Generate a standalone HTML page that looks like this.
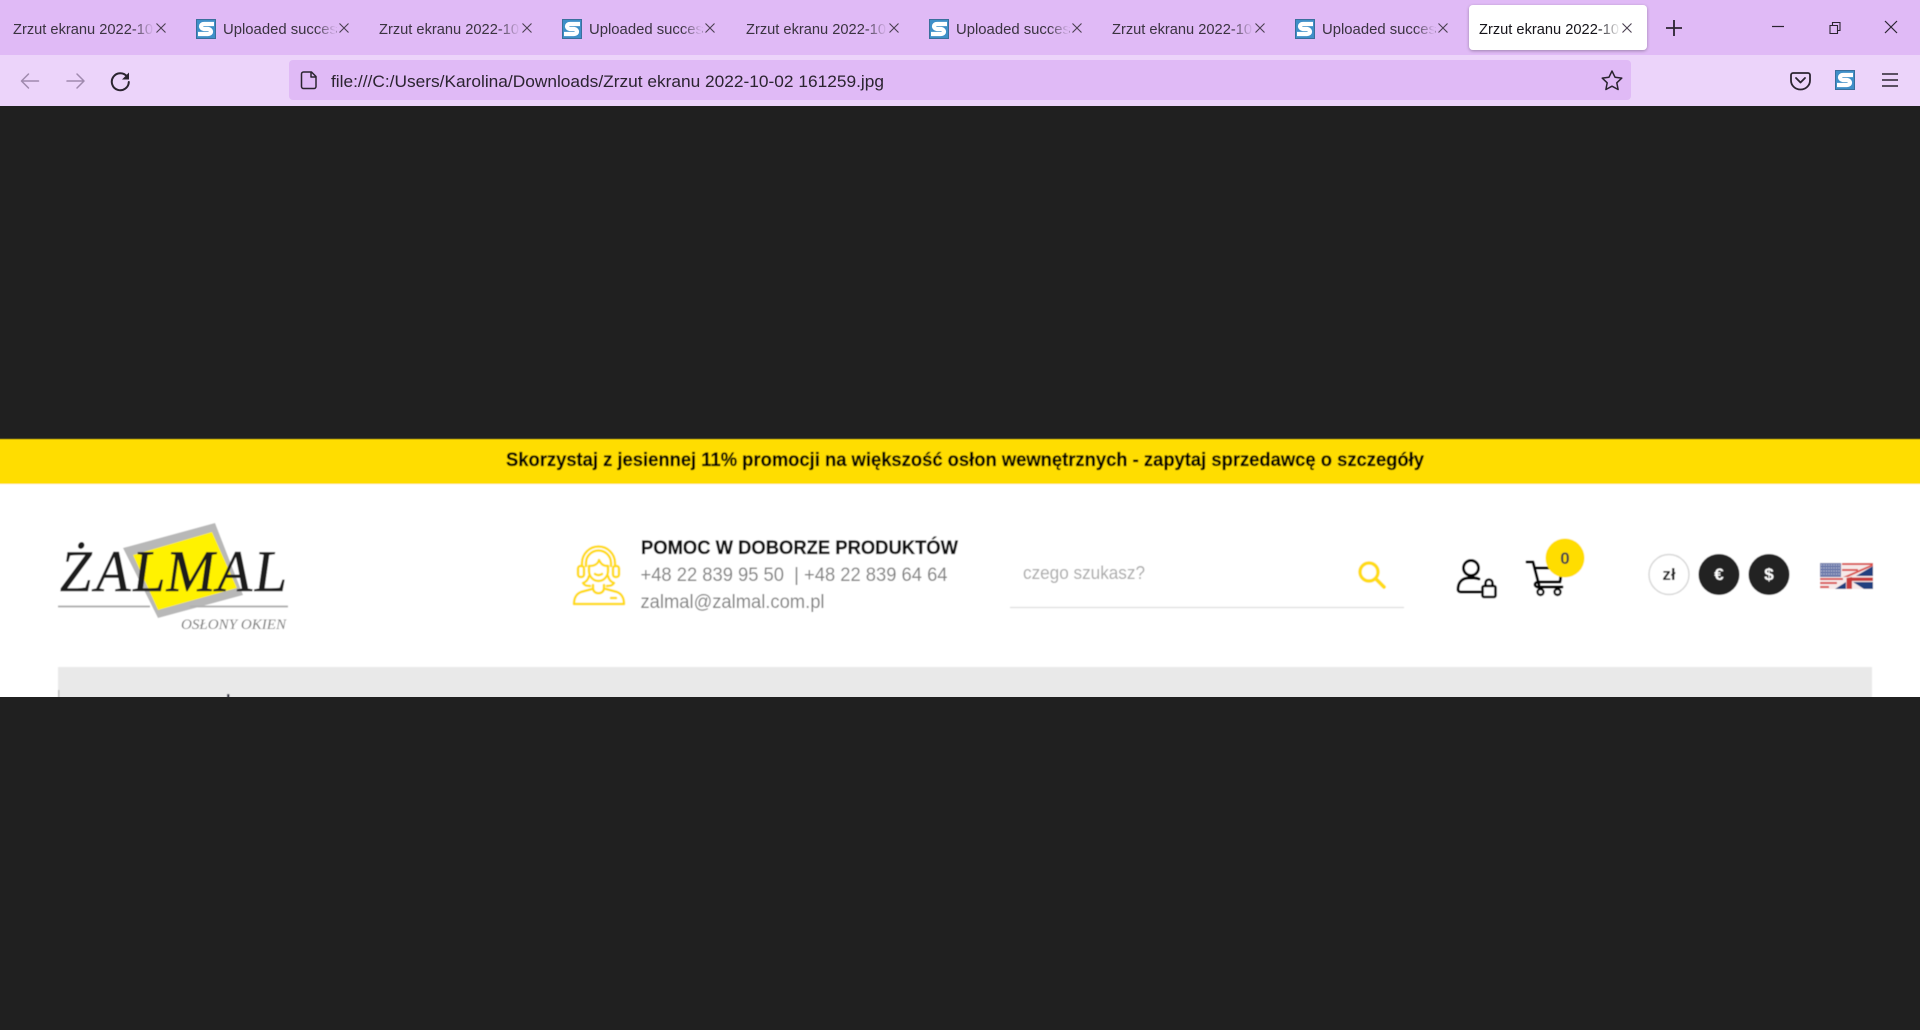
<!DOCTYPE html>
<html lang="pl">
<head>
<meta charset="utf-8">
<title>Zrzut ekranu 2022-10-02 161259.jpg</title>
<style>
html,body{margin:0;padding:0;background:#202020;width:1920px;height:1030px;overflow:hidden}
svg{position:absolute;left:0;top:0;display:block}
text{font-family:"Liberation Sans",sans-serif}
.tab{font-size:14.5px;fill:#3a3340}
.x{stroke:#4a3f50;stroke-width:1.1;fill:none}
.ic{stroke:#2b2430;stroke-width:1.5;fill:none;stroke-linecap:round;stroke-linejoin:round}
.y{stroke:#ffdc14;stroke-width:2.500;fill:none;stroke-linecap:round;stroke-linejoin:round}
.k{stroke:#000;stroke-width:2.900;fill:none;stroke-linecap:round;stroke-linejoin:round}
</style>
</head>
<body>
<svg width="1920" height="1030" viewBox="0 0 1920 1030" xmlns="http://www.w3.org/2000/svg">
<defs>
<linearGradient id="fade"><stop offset="0" stop-color="#e0baf6" stop-opacity="0"/><stop offset="1" stop-color="#e0baf6"/></linearGradient>
<linearGradient id="fadew"><stop offset="0" stop-color="#fff" stop-opacity="0"/><stop offset="1" stop-color="#fff"/></linearGradient>
<filter id="sh" x="-10%" y="-20%" width="120%" height="140%"><feDropShadow dx="0" dy="1" stdDeviation="1.500" flood-color="#000" flood-opacity=".3"/></filter>
<filter id="soft" filterUnits="userSpaceOnUse" x="-20" y="420" width="1960" height="300"><feGaussianBlur stdDeviation="0.400"/></filter>
<g id="fav"><rect x="0.500" y="0.500" width="19" height="19" fill="#3f8fc8" stroke="#3a6f9c"/><path d="M18 5H8C4 5 4 9.500 8 10h4c4 .5 4 5 0 5H2" fill="none" stroke="#fff" stroke-width="4.200"/></g>
<g id="cl"><path class="x" d="M-4.500-4.500 4.500 4.500M4.500-4.500-4.500 4.500"/></g>
</defs>

<rect width="1920" height="55" fill="#e0baf6"/>
<rect y="55" width="1920" height="51" fill="#ecd4fa"/>
<rect x="289" y="60" width="1342" height="40" rx="4" fill="#e0baf6"/>

<text class="tab" x="13" y="34" textLength="140" lengthAdjust="spacingAndGlyphs">Zrzut ekranu 2022-10</text>
<rect x="133" y="15" width="21" height="30" fill="url(#fade)"/><use href="#cl" x="161" y="28"/>
<use href="#fav" x="196" y="19"/>
<text class="tab" x="223" y="34" textLength="114" lengthAdjust="spacingAndGlyphs">Uploaded succes</text>
<rect x="316" y="15" width="20" height="30" fill="url(#fade)"/><use href="#cl" x="344" y="28"/>

<text class="tab" x="379" y="34" textLength="140" lengthAdjust="spacingAndGlyphs">Zrzut ekranu 2022-10</text>
<rect x="499" y="15" width="21" height="30" fill="url(#fade)"/><use href="#cl" x="527" y="28"/>
<use href="#fav" x="562" y="19"/>
<text class="tab" x="589" y="34" textLength="114" lengthAdjust="spacingAndGlyphs">Uploaded succes</text>
<rect x="682" y="15" width="20" height="30" fill="url(#fade)"/><use href="#cl" x="710" y="28"/>

<text class="tab" x="746" y="34" textLength="140" lengthAdjust="spacingAndGlyphs">Zrzut ekranu 2022-10</text>
<rect x="866" y="15" width="21" height="30" fill="url(#fade)"/><use href="#cl" x="894" y="28"/>
<use href="#fav" x="929" y="19"/>
<text class="tab" x="956" y="34" textLength="114" lengthAdjust="spacingAndGlyphs">Uploaded succes</text>
<rect x="1049" y="15" width="20" height="30" fill="url(#fade)"/><use href="#cl" x="1077" y="28"/>

<text class="tab" x="1112" y="34" textLength="140" lengthAdjust="spacingAndGlyphs">Zrzut ekranu 2022-10</text>
<rect x="1232" y="15" width="21" height="30" fill="url(#fade)"/><use href="#cl" x="1260" y="28"/>
<use href="#fav" x="1295" y="19"/>
<text class="tab" x="1322" y="34" textLength="114" lengthAdjust="spacingAndGlyphs">Uploaded succes</text>
<rect x="1415" y="15" width="20" height="30" fill="url(#fade)"/><use href="#cl" x="1443" y="28"/>

<rect x="1469" y="5" width="178" height="45" rx="4" fill="#fff" filter="url(#sh)"/>
<text class="tab" x="1479" y="34" textLength="140" lengthAdjust="spacingAndGlyphs" style="fill:#15141a">Zrzut ekranu 2022-10</text>
<rect x="1599" y="15" width="21" height="30" fill="url(#fadew)"/><use href="#cl" x="1627" y="28"/>

<path d="M1674 20v16M1666 28h16" stroke="#2b2430" stroke-width="1.800"/>
<path d="M1772 26.500h12" stroke="#2b2430" stroke-width="1.200"/>
<path d="M1830 25.500h7.500v8h-7.500zM1832.500 25.500v-3h7.500v8h-2.500" fill="none" stroke="#2b2430" stroke-width="1.100"/>
<path d="M1885 21l12 12M1897 21l-12 12" stroke="#2b2430" stroke-width="1.200"/>

<g stroke="#a08aae" stroke-width="1.500" fill="none" stroke-linecap="round" stroke-linejoin="round">
<path d="M21.500 81h17M28.500 74l-7 7 7 7"/>
<path d="M67 81h17M77 74l7 7-7 7"/>
</g>
<path class="ic" style="stroke-width:2" d="M127 76.500A8.500 8.500 0 1 0 128.800 82"/>
<path d="M129 72.500v7h-7z" fill="#2b2430"/>
<path class="ic" d="M303.500 72h8l4.500 4.500v10a2 2 0 0 1-2 2h-10.500a2 2 0 0 1-2-2v-12.500a2 2 0 0 1 2-2zM311 72v5h5"/>
<text x="331" y="87" font-size="17" fill="#2b2430" textLength="553" lengthAdjust="spacingAndGlyphs">file:///C:/Users/Karolina/Downloads/Zrzut ekranu 2022-10-02 161259.jpg</text>
<path class="ic" d="M1612 71l3 6.200 6.800.9-5 4.700 1.300 6.700-6.100-3.300-6.100 3.300 1.300-6.700-5-4.700 6.800-.9z"/>
<path class="ic" style="stroke-width:1.800" d="M1793 73h15a2 2 0 0 1 2 2v5.500a9.500 9 0 0 1-19 0V75a2 2 0 0 1 2-2zM1796 78l4.500 4.500 4.500-4.500"/>
<use href="#fav" transform="translate(1835 70)"/>
<path d="M1882 74h16M1882 80h16M1882 86h16" stroke="#2b2430" stroke-width="1.600"/>

<g filter="url(#soft)">
<rect x="-20" y="484" width="1960" height="225" fill="#fff"/>
<rect x="-20" y="439" width="1960" height="45" fill="#ffdd00"/>
<text x="506" y="466" font-size="19" font-weight="700" fill="#000" stroke="#000" stroke-width=".25" textLength="918" lengthAdjust="spacingAndGlyphs">Skorzystaj z jesiennej 11% promocji na większość osłon wewnętrznych - zapytaj sprzedawcę o szczegóły</text>

<path d="M215 523 243 595 158 618 123 548z" fill="#b8b8b8"/>
<path d="M212 532 237 588 158 610 133 555z" fill="#fff200"/>
<path d="M58 606.500H150M190 606.500H288" stroke="#b0b0b0" stroke-width="2"/>
<text transform="translate(58 591) skewX(-8)" x="0" y="0" font-size="59" stroke="#1c1c1c" stroke-width=".6" textLength="228" lengthAdjust="spacingAndGlyphs" style="font-family:'Liberation Serif',serif" fill="#1c1c1c">ŻALMAL</text>
<text x="181" y="629" font-size="15" font-style="italic" textLength="105" lengthAdjust="spacingAndGlyphs" style="font-family:'Liberation Serif',serif" fill="#777">OSŁONY OKIEN</text>

<g class="y">
<path d="M582 566v-3a16.500 16.500 0 0 1 33 0v3"/>
<path d="M586 566v-3a12.500 12.500 0 0 1 25 0v3"/>
<rect x="578" y="566" width="6" height="11" rx="2.500"/>
<rect x="613" y="566" width="6" height="11" rx="2.500"/>
<path d="M589 566c5 0 9-2 10-6 2 4 4 6 9 6v5a9.500 10 0 0 1-19 0z"/>
<path d="M595 574c2 1.500 5 1.500 7 0"/>
<path d="M589 576c-1 4-3 6-6 7 1 2 4 3 7 3M608 576c1 4 3 6 6 7-1 2-4 3-7 3"/>
<path d="M593 585v3c0 7 11 7 11 0v-3"/>
<path d="M592 589 581 592c-5 2-7 6-7 12h50c0-6-2-10-7-12l-11-3"/>
<path d="M611 598h5"/>
</g>
<text x="641" y="554" font-size="19" font-weight="700" fill="#111" stroke="#111" stroke-width=".3" textLength="317" lengthAdjust="spacingAndGlyphs">POMOC W DOBORZE PRODUKTÓW</text>
<text x="640.500" y="581" font-size="19" fill="#808080" xml:space="preserve" textLength="307" lengthAdjust="spacingAndGlyphs">+48 22 839 95 50  | +48 22 839 64 64</text>
<text x="640.500" y="608" font-size="19" fill="#808080" textLength="184" lengthAdjust="spacingAndGlyphs">zalmal@zalmal.com.pl</text>

<text x="1023" y="579" font-size="18" fill="#aaa" textLength="122" lengthAdjust="spacingAndGlyphs">czego szukasz?</text>
<circle cx="1369" cy="572" r="9" fill="none" stroke="#ffdc14" stroke-width="3.500"/>
<path d="M1376 579l8 8" stroke="#ffdc14" stroke-width="3.800" stroke-linecap="round"/>
<path d="M1010 607.500H1404" stroke="#ddd" stroke-width="1.300"/>

<circle class="k" cx="1471" cy="568" r="7.500"/>
<path class="k" d="M1480 592H1461c-2 0-3-1-3-2.500 0-7 4-11.500 11-11.500h5c2 0 3.500 .3 5 1"/>
<path d="M1484 586h10a1.500 1.500 0 0 1 1.500 1.500v8a1.500 1.500 0 0 1-1.500 1.500h-10a1.500 1.500 0 0 1-1.500-1.500v-8a1.500 1.500 0 0 1 1.500-1.500zM1485.500 586v-3a3.500 3.500 0 0 1 7 0v3" fill="none" stroke="#000" stroke-width="2.600"/>

<path class="k" d="M1527 562h6l6 23M1535 568h27l-2 14h-21c-3 0-4 1.500-4 2.500s1 2.500 3 2.500h24"/>
<circle class="k" style="stroke-width:2.400" cx="1540.500" cy="592" r="3"/>
<circle class="k" style="stroke-width:2.400" cx="1557.500" cy="592" r="3"/>
<circle cx="1565" cy="558" r="19.500" fill="#ffdd00"/>
<text x="1565" y="564" font-size="17" font-weight="700" fill="#444" text-anchor="middle">0</text>

<circle cx="1669" cy="574.500" r="20" fill="#fff" stroke="#d8d8d8" stroke-width="1.500"/>
<text x="1669" y="580" font-size="17" font-weight="700" fill="#222" text-anchor="middle">zł</text>
<circle cx="1719" cy="574.500" r="20.500" fill="#242424"/>
<text x="1719" y="580" font-size="17" font-weight="700" fill="#fff" text-anchor="middle">€</text>
<circle cx="1769" cy="574.500" r="20.500" fill="#242424"/>
<text x="1769" y="580" font-size="17" font-weight="700" fill="#fff" text-anchor="middle">$</text>

<g>
<rect x="1820" y="563" width="53" height="26" fill="#f6e9e9"/>
<path d="M1842 564H1873M1842 570H1858M1820 579H1843M1820 583H1837M1820 587H1829" stroke="#d9534f" stroke-width="2"/>
<path d="M1873 566V576H1856z" fill="#24407f"/>
<path d="M1835 589 1846 582V589zM1853 582H1873V589H1864z" fill="#24407f"/>
<path d="M1846.500 589V578L1852 577V589zM1850 577.500H1873V581H1850z" fill="#c83a3a"/>
<path d="M1843 577 1873 564V566L1848 577z" fill="#d9534f"/>
<rect x="1820" y="563" width="21" height="14" fill="#6d7aab"/>
<path d="M1821 565h19M1821 568h19M1821 571h19M1821 574h19" stroke="#c9cde2" stroke-width="1" stroke-dasharray="1 1.500"/>
</g>

<rect x="58" y="667" width="1814" height="40" fill="#e9e9e9"/>
<rect x="58" y="690" width="1.500" height="17" fill="#bbb"/>
<rect x="227" y="694" width="2.500" height="10" fill="#334"/>
</g>
<rect y="697" width="1920" height="333" fill="#202020"/>
</svg>
</body>
</html>
